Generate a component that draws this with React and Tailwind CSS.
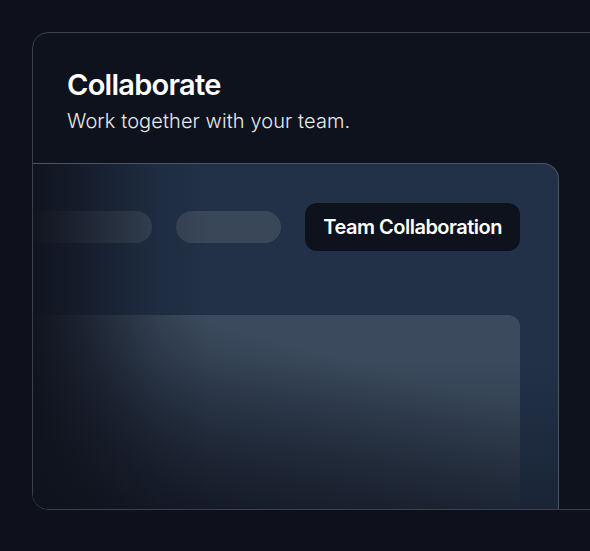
export default function App() {
  return (
    <div className="w-[590px] h-[551px] overflow-hidden bg-[#0e111b] pt-8 pl-8" style={{ fontFamily: "Inter, 'Noto Sans', sans-serif" }}>
      <div className="relative w-[640px] h-[478px] rounded-2xl border border-[#3b404c] bg-[#0e121c] overflow-hidden flex flex-col">
        <div className="pl-[34px] pt-[34px]">
          <h2 className="text-[29px] leading-[36px] font-semibold text-white tracking-[-0.025em]">Collaborate</h2>
          <p className="mt-[5px] text-[20px] leading-[26px] font-light text-[#e8eaee] tracking-[0.005em]">Work together with your team.</p>
        </div>
        <div className="relative mt-[29px] w-[526px] flex-1 flex flex-col rounded-tr-2xl border-t border-r border-[#4b5566] bg-[#223148] pr-[38px] pt-[39px]">
          <div className="flex items-center justify-end gap-6">
            <div className="h-8 w-[140px] shrink-0 rounded-full bg-[#3a4759]" />
            <div className="h-8 w-[105px] shrink-0 rounded-full bg-[#3a4759]" />
            <div className="h-12 shrink-0 whitespace-nowrap rounded-xl bg-[#0e121c] px-[18px] flex items-center text-[20px] font-semibold text-white tracking-[-0.025em]">Team Collaboration</div>
          </div>
          <div className="mt-16 flex-1 rounded-tr-xl bg-[linear-gradient(195deg,#3b4a5d_28%,#2a3647_55%,#111725_100%)]" />
          <div className="pointer-events-none absolute inset-0 bg-[linear-gradient(90deg,rgba(14,18,28,0.95)_0%,rgba(14,18,28,0.55)_12%,rgba(14,18,28,0.15)_24%,rgba(14,18,28,0)_34%)]" />
          <div className="pointer-events-none absolute left-0 right-0 bottom-0 h-[150px] bg-gradient-to-b from-transparent to-[#0e121c]/40" />
        </div>
      </div>
    </div>
  );
}
